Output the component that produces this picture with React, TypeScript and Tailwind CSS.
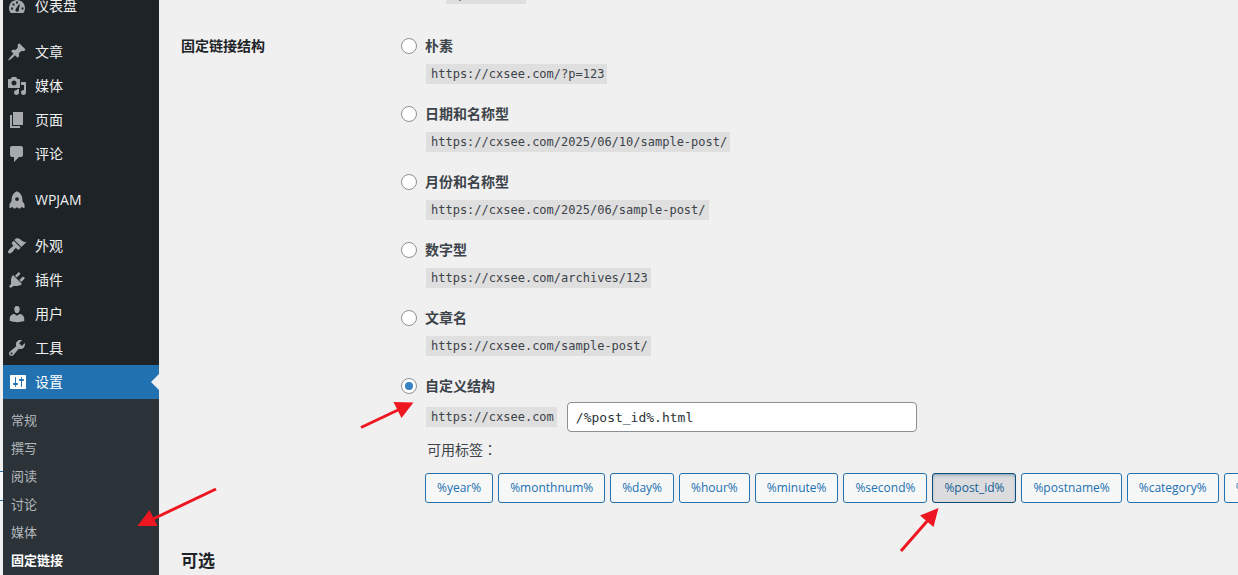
import { useState } from "react";

type MenuItem = { label: string; icon: string; startsGroup?: boolean; current?: boolean };

const menu: MenuItem[] = [
  {
    label: "仪表盘",
    icon: "M3.76 17h12.48c1.11-1.37 1.76-3.11 1.76-5 0-4.42-3.58-8-8-8s-8 3.58-8 8c0 1.89.65 3.63 1.76 5zM9 5.500h2v2H9v-2zM5.500 7.500h2v2h-2v-2zM12 8.300l.9.400-1.100 4.500c.5 1.400-.4 2.600-1.600 2.600s-2.200-1.200-1.600-2.500zM4 11.500h2v2H4v-2zM14.500 11.500h2v2h-2v-2z",
  },
  {
    label: "文章",
    startsGroup: true,
    icon: "M10.44 3.02l1.82-1.82 6.36 6.35-1.83 1.82c-1.05-.68-2.48-.57-3.41.36l-.75.75c-.92.93-1.04 2.35-.35 3.41l-1.83 1.82-2.41-2.41-2.8 2.79c-.42.42-3.38 2.71-3.8 2.29s1.86-3.39 2.28-3.81l2.79-2.79L4.1 9.36l1.83-1.82c1.05.69 2.48.57 3.4-.36l.75-.75c.93-.92 1.05-2.35.36-3.41z",
  },
  {
    label: "媒体",
    icon: "M13 11V4c0-.55-.45-1-1-1h-1.67L9 1H5L3.67 3H2c-.55 0-1 .45-1 1v7c0 .55.45 1 1 1h10c.55 0 1-.45 1-1zM7 4.5c1.38 0 2.5 1.12 2.5 2.5S8.38 9.5 7 9.5 4.5 8.38 4.5 7 5.62 4.5 7 4.5zM14 6h5v10.5c0 1.38-1.12 2.5-2.5 2.5S14 17.88 14 16.5s1.12-2.5 2.5-2.5c.17 0 .34.02.5.05V9h-3V6zm-4 8.05V13h2v3.5c0 1.38-1.12 2.5-2.5 2.5S7 17.88 7 16.5 8.12 14 9.5 14c.17 0 .34.02.5.05z",
  },
  { label: "页面", icon: "M6 15V2h10v13H6zm-1 1h8v2H3V5h2v11z" },
  {
    label: "评论",
    icon: "M5 2h9c1.1 0 2 .9 2 2v7c0 1.1-.9 2-2 2h-2l-5 5v-5H5c-1.1 0-2-.9-2-2V4c0-1.1.9-2 2-2z",
  },
  {
    label: "WPJAM",
    startsGroup: true,
    icon: "M10 1.200C13.400 2.600 15.400 5.600 15.400 9.200v1.800l2.100 3.200v4l-3.300-1.200-.8 1.400H11.800L10 17.200l-1.800 1.200H6.600L5.800 17l-3.300 1.200v-4L4.600 11V9.200c0-3.600 2-6.600 5.400-8zM10 7.200a1.900 1.900 0 1 0 0 3.800 1.900 1.900 0 0 0 0-3.800z",
  },
  {
    label: "外观",
    startsGroup: true,
    icon: "M14.48 11.06L7.41 3.99l1.5-1.5c.5-.56 2.3-.47 3.51.32 1.21.8 1.43 1.28 2.91 2.1 1.18.64 2.45 1.26 4.45.85zm-.71.71L6.7 4.7 4.93 6.47c-.39.39-.39 1.02 0 1.41l1.06 1.06c.39.39.39 1.03 0 1.42-.6.6-1.43 1.11-2.21 1.69-.35.26-.7.53-1.01.84C1.43 14.23.4 16.08 1.4 17.07c.99 1 2.84-.03 4.18-1.36.31-.31.58-.66.85-1.02.57-.78 1.08-1.61 1.69-2.21.39-.39 1.02-.39 1.41 0l1.06 1.06c.39.39 1.02.39 1.41 0z",
  },
  {
    label: "插件",
    icon: "M13.11 4.36L9.87 7.6 8 5.73l3.24-3.24c.35-.34 1.05-.2 1.56.32.52.51.66 1.21.31 1.55zm-8 1.77l.91-1.12 9.01 9.01-1.19.84c-.71.71-2.63 1.16-3.82 1.16H6.14L4.9 17.26c-.59.59-1.54.59-2.12 0-.59-.58-.59-1.53 0-2.12l1.24-1.24v-3.88c0-1.13.4-3.19 1.09-3.89zm7.26 3.97l3.24-3.24c.34-.35 1.04-.21 1.55.31.52.51.66 1.21.31 1.55l-3.24 3.25z",
  },
  {
    label: "用户",
    icon: "M10 9.25c-2.27 0-2.73-3.44-2.73-3.44C7 4.02 7.82 2 9.97 2c2.16 0 2.98 2.02 2.71 3.81 0 0-.41 3.44-2.68 3.44zm0 2.57L12.72 10c2.39 0 4.52 2.33 4.52 4.53v2.49s-3.65 1.13-7.24 1.13c-3.65 0-7.24-1.13-7.24-1.13v-2.49c0-2.25 1.94-4.48 4.47-4.48z",
  },
  {
    label: "工具",
    icon: "M16.68 9.77c-1.34 1.34-3.3 1.67-4.95.99l-5.41 6.52c-.99.99-2.59.99-3.58 0s-.99-2.59 0-3.57l6.52-5.42c-.68-1.65-.35-3.61.99-4.95 1.28-1.28 3.12-1.62 4.72-1.06l-2.89 2.89 2.82 2.82 2.86-2.87c.53 1.58.18 3.39-1.08 4.65zM3.81 16.21c.4.39 1.04.39 1.43 0 .4-.4.4-1.04 0-1.43-.39-.4-1.03-.4-1.43 0-.39.39-.39 1.03 0 1.43z",
  },
  {
    label: "设置",
    current: true,
    icon: "M19 16V4c0-.55-.45-1-1-1H4c-.55 0-1 .45-1 1v12c0 .55.45 1 1 1h14c.55 0 1-.45 1-1zM9 11h1c.55 0 1 .45 1 1s-.45 1-1 1H9v1.5c0 .28-.22.5-.5.5s-.5-.22-.5-.5V13H7c-.55 0-1-.45-1-1s.45-1 1-1h1V5.5c0-.28.22-.5.5-.5s.5.22.5.5V11zm5-2h-1c-.55 0-1-.45-1-1s.45-1 1-1h1V5.5c0-.28.22-.5.5-.5s.5.22.5.5V7h1c.55 0 1 .45 1 1s-.45 1-1 1h-1v5.5c0 .28-.22.5-.5.5s-.5-.22-.5-.5V9z",
  },
];

const submenu = ["常规", "撰写", "阅读", "讨论", "媒体", "固定链接"];

const structures = [
  { id: "plain", label: "朴素", sample: "https://cxsee.com/?p=123" },
  { id: "day", label: "日期和名称型", sample: "https://cxsee.com/2025/06/10/sample-post/" },
  { id: "month", label: "月份和名称型", sample: "https://cxsee.com/2025/06/sample-post/" },
  { id: "numeric", label: "数字型", sample: "https://cxsee.com/archives/123" },
  { id: "name", label: "文章名", sample: "https://cxsee.com/sample-post/" },
];

const tags = [
  "%year%",
  "%monthnum%",
  "%day%",
  "%hour%",
  "%minute%",
  "%second%",
  "%post_id%",
  "%postname%",
  "%category%",
  "%author%",
];

function Code({ children }: { children: string }) {
  return (
    <code className="block h-5 w-fit shrink-0 bg-[#dfdfdf] pr-[3px] pl-[5px] font-['DejaVu_Sans_Mono',monospace] text-[12px] leading-5 whitespace-nowrap text-[#3c434a]">
      {children}
    </code>
  );
}

function Option({
  id,
  label,
  selected,
  onSelect,
}: {
  id: string;
  label: string;
  selected: string;
  onSelect: (id: string) => void;
}) {
  return (
    <div className="flex h-5 items-center gap-2">
      <input
        type="radio"
        id={id}
        name="structure"
        checked={selected === id}
        onChange={() => onSelect(id)}
        className="grid size-4 shrink-0 appearance-none place-content-center rounded-full border border-[#8c8f94] bg-white before:size-2 before:rounded-full before:content-[''] checked:before:bg-[#3582c4]"
      />
      <label htmlFor={id} className="text-[14px] leading-5 font-bold">
        {label}
      </label>
    </div>
  );
}

function Sidebar() {
  return (
    <nav className="-mt-[11px] ml-[3px] w-[156px] shrink-0 bg-[#1d2327]">
      <ul>
        {menu.map((item) => (
          <li key={item.label} className={item.startsGroup ? "mt-3" : ""}>
            <a
              href="#"
              className={
                "relative flex h-[34px] items-center gap-2 pl-1 text-[14px] leading-5 " +
                (item.current ? "bg-[#2271b1] text-white" : "text-[#f0f0f1]")
              }
            >
              <svg
                viewBox="0 0 20 20"
                className={"size-5 " + (item.current ? "fill-white" : "fill-[#a7aaad]")}
                fillRule="evenodd"
                aria-hidden="true"
              >
                <path d={item.icon} />
              </svg>
              {item.label}
              {item.current && (
                <svg viewBox="0 0 8 16" className="absolute top-[9px] right-0 h-4 w-2 fill-[#f0f0f0]" aria-hidden="true">
                  <path d="M8 0v16L0 8z" />
                </svg>
              )}
            </a>
          </li>
        ))}
      </ul>
      <ul className="min-h-screen bg-[#2c3338] pt-[7px]">
        {submenu.map((name) => (
          <li key={name}>
            <a
              href="#"
              className={
                "flex h-7 items-center pl-2 text-[13px] leading-5 " +
                (name === "固定链接" ? "font-bold text-white" : "text-[#b4b9be]")
              }
            >
              {name}
            </a>
          </li>
        ))}
      </ul>
    </nav>
  );
}

export default function App() {
  const [selected, setSelected] = useState("custom");
  const [structure, setStructure] = useState("/%post_id%.html");

  return (
    <div className="relative flex h-screen items-start overflow-hidden bg-[#f0f0f0] font-['Open_Sans','Noto_Sans_CJK_SC',sans-serif] text-[#3c434a]">
      <Sidebar />
      <div className="absolute top-[471px] left-0 h-[30px] w-[3px] border-y border-[#2271b1] bg-[#f6f7f7]" />

      <main className="min-w-0 grow pl-[22px]">
        <div className="-mt-4 pl-[265px]">
          <Code>%postname%</Code>
        </div>

        <fieldset className="mt-8 flex">
          <legend className="float-left w-[220px] text-[14px] leading-5 font-bold text-[#1d2327]">
            固定链接结构
          </legend>
          <div className="min-w-0 grow">
            {structures.map((s) => (
              <div key={s.id} className="mb-5 flex flex-col gap-2">
                <Option id={s.id} label={s.label} selected={selected} onSelect={setSelected} />
                <div className="pl-[25px]">
                  <Code>{s.sample}</Code>
                </div>
              </div>
            ))}
            <Option id="custom" label="自定义结构" selected={selected} onSelect={setSelected} />
            <div className="mt-[6px] flex items-center gap-[10px] pl-[25px]">
              <Code>https://cxsee.com</Code>
              <input
                type="text"
                aria-label="自定义结构"
                value={structure}
                onChange={(e) => setStructure(e.target.value)}
                className="h-[30px] w-[350px] rounded border border-[#8c8f94] bg-white px-2 font-['DejaVu_Sans_Mono',monospace] text-[13px] text-[#2c3338]"
              />
            </div>
            <p className="mt-[7px] pl-[26px] text-[14px] leading-5">
              可用标签<span className="font-['Noto_Sans_CJK_TC',sans-serif]">：</span>
            </p>
            <ul className="mt-[13px] flex gap-[5px] pl-6">
              {tags.map((tag) => (
                <li key={tag}>
                  <button
                    type="button"
                    aria-pressed={structure.includes(tag)}
                    className={
                      "block h-[30px] rounded-[3px] border px-[11px] text-[12px] leading-5 whitespace-nowrap " +
                      (structure.includes(tag)
                        ? "border-[#0a4b78] bg-[#dcdcde] text-[#135e96] shadow-[inset_0_2px_5px_-3px_#0a4b78]"
                        : "border-[#2271b1] bg-[#f6f7f7] text-[#2271b1]")
                    }
                  >
                    {tag}
                  </button>
                </li>
              ))}
            </ul>
          </div>
        </fieldset>

        <h2 className="mt-[46px] text-[17px] leading-6 font-bold text-[#1d2327]">可选</h2>
      </main>

      <svg
        viewBox="0 0 1238 575"
        className="pointer-events-none absolute top-0 left-0 h-[575px] w-[1238px] fill-[#ee1620] stroke-[#ee1620]"
        aria-hidden="true"
      >
        <path d="M361 427.500L398 410M216 489L153 519M901 551L929 519" strokeWidth="3" />
        <path d="M413.500 402.500L393.500 402 401.500 418zM137.500 526L149.500 510 157.500 526zM938.500 508L920 515.500 933.500 527z" stroke="none" />
      </svg>
    </div>
  );
}
